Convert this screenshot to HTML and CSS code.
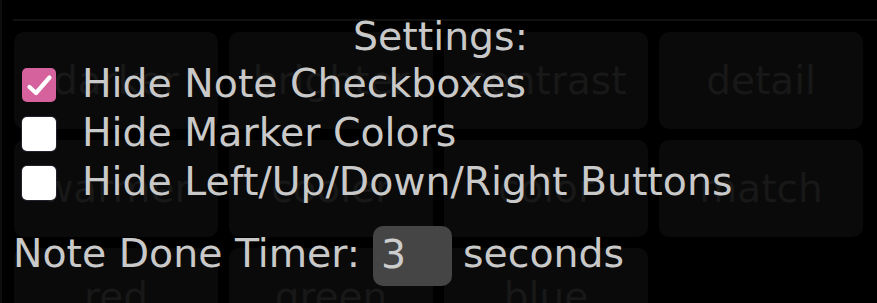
FILE: index.html
```html
<!DOCTYPE html>
<html>
<head>
<meta charset="utf-8">
<link rel="stylesheet" href="styles.css">
</head>
<body>
<div class="app">
  <div class="rule"></div>
  <div class="grid">
    <div class="tile">darker</div>
    <div class="tile">brighter</div>
    <div class="tile">contrast</div>
    <div class="tile">detail</div>
    <div class="tile">warmer</div>
    <div class="tile">cooler</div>
    <div class="tile">color</div>
    <div class="tile">match</div>
    <div class="tile">red</div>
    <div class="tile">green</div>
    <div class="tile">blue</div>
  </div>
  <div class="settings">
    <div class="title">Settings:</div>
    <label class="row">
      <span class="box checked"><svg viewBox="0 0 34 34" width="34" height="34"><path d="M7.5 19 L14 25 L27.5 9.5" fill="none" stroke="#fff" stroke-width="4.2" stroke-linecap="round" stroke-linejoin="round"/></svg></span>
      <span class="label">Hide Note Checkboxes</span>
    </label>
    <label class="row">
      <span class="box"></span>
      <span class="label">Hide Marker Colors</span>
    </label>
    <label class="row">
      <span class="box"></span>
      <span class="label">Hide Left/Up/Down/Right Buttons</span>
    </label>
    <div class="timer">
      <span class="tlabel">Note Done Timer:</span>
      <input class="num" type="text" value="3">
      <span class="tlabel">seconds</span>
    </div>
  </div>
</div>
</body>
</html>
```
FILE: styles.css
```css
html, body {
  margin: 0;
  padding: 0;
  background: #000;
}
body {
  width: 877px;
  height: 303px;
  overflow: hidden;
  font-family: "DejaVu Sans", Verdana, sans-serif;
}
.app {
  position: relative;
  height: 303px;
  box-sizing: border-box;
  padding-top: 19px;
  border-left: 2px solid #0e0e0e;
}
.rule {
  margin-left: 11px;
  height: 2px;
  background: #111;
}
.grid {
  display: grid;
  grid-template-columns: repeat(4, 204px);
  grid-auto-rows: 97px;
  column-gap: 11px;
  row-gap: 11px;
  padding-left: 12px;
  margin-top: 11px;
}
.tile {
  background: #0a0a0a;
  border-radius: 10px;
  display: flex;
  align-items: center;
  justify-content: center;
  color: #181818;
  font-size: 39px;
  line-height: 45px;
}
.settings {
  position: absolute;
  left: -2px;
  top: 0;
  width: 877px;
  color: #c9c9c9;
  font-size: 39.4px;
}
.title {
  text-align: center;
  line-height: 45px;
  padding-top: 14px;
  padding-left: 4px;
}
.row {
  display: flex;
  align-items: flex-start;
  line-height: 49px;
  height: 49px;
  padding-left: 22px;
}
.box {
  width: 34px;
  height: 34px;
  margin-top: 9px;
  border-radius: 5px;
  background: #fff;
  box-shadow: 0 0 1px 1px rgba(60, 50, 70, 0.6);
  flex: none;
  display: block;
}
.box svg {
  display: block;
}
.box.checked {
  background: #d5629d;
  box-shadow: none;
}
.label {
  margin-left: 26px;
  white-space: nowrap;
}
.timer {
  display: flex;
  align-items: flex-start;
  margin-top: 20px;
  padding-left: 13px;
}
.tlabel {
  line-height: 45px;
  margin-top: 5px;
  white-space: nowrap;
}
.num {
  width: 79px;
  height: 60px;
  box-sizing: border-box;
  margin: 0 11px 0 13px;
  padding: 0 0 4px 8px;
  border: none;
  outline: none;
  border-radius: 10px;
  background: #454545;
  color: #cdcdcd;
  font-family: "DejaVu Sans", Verdana, sans-serif;
  font-size: 39.4px;
}
```
